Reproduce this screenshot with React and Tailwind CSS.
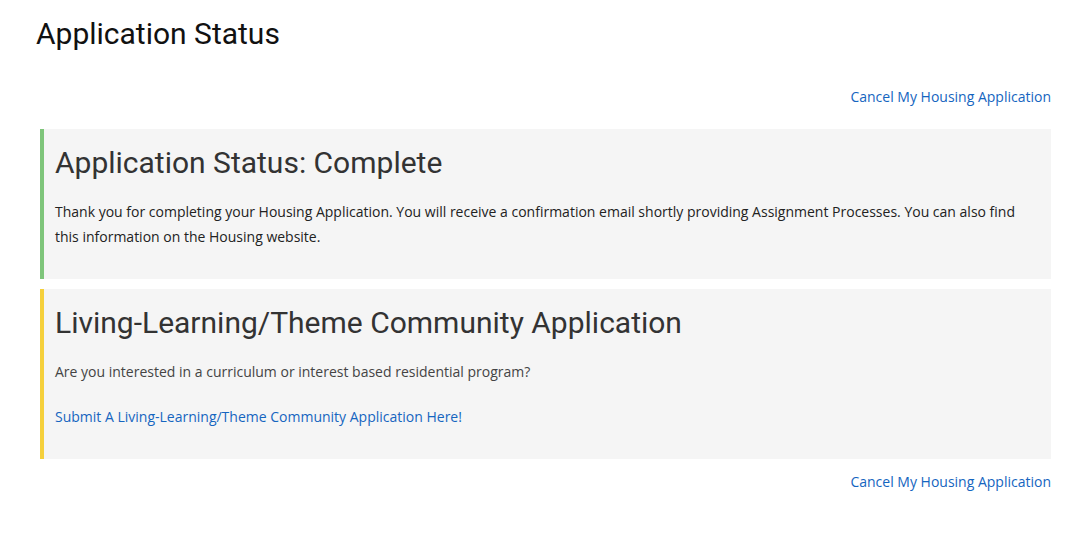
import React from 'react';

const heading = "font-['Roboto',sans-serif]";
const body = "font-['Open_Sans',sans-serif]";

// Right aligned cancel link, used above and below the panels
const CancelLink = ({ className = '' }) => (
  <div className={`flex justify-end ${className}`}>
    <a href="#" className={`${body} text-[14px] leading-[20px] text-[#1565c0]`}>
      Cancel My Housing Application
    </a>
  </div>
);

export default function App() {
  return (
    <div className="min-h-screen bg-white pl-[36px] pr-[35px] pt-[16px]">
      <h1 className={`${heading} text-[30px] leading-[36px] text-[#111]`}>Application Status</h1>

      <CancelLink className="mt-[35px]" />

      <div className="ml-[4px] mt-[22px] flex flex-col gap-[10px]">
        {/* Completed status */}
        <section className="border-l-4 border-[#7ec57a] bg-[#f5f5f5] pl-[11px] pr-[20px] pt-[16px] pb-[30px]">
          <h2 className={`${heading} text-[30px] leading-[36px] text-[#333]`}>Application Status: Complete</h2>
          <p className={`${body} mt-[18px] text-[14px] leading-[25px] text-[#222]`}>
            Thank you for completing your Housing Application. You will receive a confirmation email shortly providing Assignment Processes. You can also find this information on the Housing website.
          </p>
        </section>

        {/* LLC application */}
        <section className="border-l-4 border-[#f5d03c] bg-[#f5f5f5] pl-[11px] pr-[20px] pt-[16px] pb-[30px]">
          <h2 className={`${heading} text-[30px] leading-[36px] text-[#333]`}>Living-Learning/Theme Community Application</h2>
          <p className={`${body} mt-[18px] text-[14px] leading-[25px] text-[#444]`}>
            Are you interested in a curriculum or interest based residential program?
          </p>
          <p className="mt-[20px]">
            <a href="#" className={`${body} text-[14px] leading-[25px] text-[#1565c0]`}>
              Submit A Living-Learning/Theme Community Application Here!
            </a>
          </p>
        </section>
      </div>

      <CancelLink className="mt-[13px]" />
    </div>
  );
}
